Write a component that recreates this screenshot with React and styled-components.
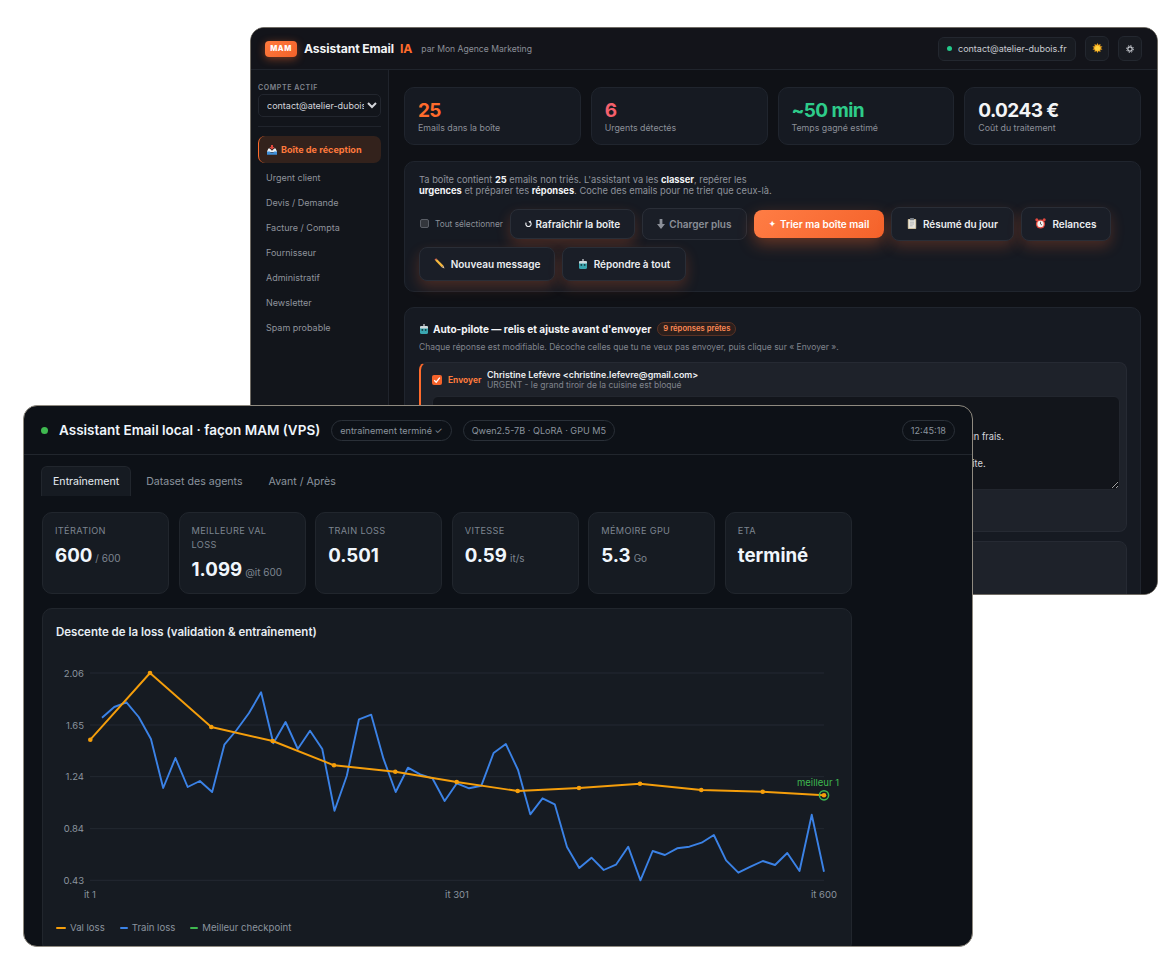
import React from "react";
import styled, { createGlobalStyle } from "styled-components";

const GlobalStyle = createGlobalStyle`
  html, body {
    margin: 0;
    padding: 0;
    background: #fff;
  }
  * {
    box-sizing: border-box;
  }
  body {
    font-family: Inter, "Liberation Sans", sans-serif;
  }
`;

const Desk = styled.div`
  position: relative;
  width: 1176px;
  height: 968px;
  overflow: hidden;
  background: #fff;
`;

const Window = styled.div`
  position: absolute;
  left: ${(p) => p.$left}px;
  top: ${(p) => p.$top}px;
  width: ${(p) => p.$width}px;
  height: ${(p) => p.$height}px;
  display: flex;
  flex-direction: column;
  overflow: hidden;
  border-radius: 14px;
  border: 1px solid ${(p) => p.$edge};
  background: ${(p) => p.$bg};
`;

/* Back window: mail assistant */

const MailHeader = styled.header`
  flex: none;
  height: 42px;
  display: flex;
  align-items: center;
  padding: 0 15px 0 14px;
  background: #13141a;
  border-bottom: 1px solid #20242c;
`;
const Logo = styled.div`
  width: 32px;
  height: 16px;
  margin-right: 7px;
  border-radius: 4px;
  background: linear-gradient(135deg, #ff7a3d, #f4622a);
  box-shadow: 0 2px 8px rgba(255, 107, 44, 0.45);
  color: #fff;
  font-size: 7.5px;
  font-weight: 800;
  letter-spacing: 0.5px;
  line-height: 16px;
  text-align: center;
`;
const MailTitle = styled.div`
  color: #f3f4f6;
  font-size: 12.2px;
  font-weight: 700;
  letter-spacing: -0.1px;
  span {
    margin-left: 6px;
    color: #ff6b2c;
  }
`;
const MailOwner = styled.div`
  margin-left: 9px;
  color: #8b8f98;
  font-size: 8.6px;
`;
const HeaderRight = styled.div`
  margin-left: auto;
  display: flex;
  align-items: center;
`;
const AccountChip = styled.div`
  height: 24px;
  width: 138px;
  display: flex;
  align-items: center;
  gap: 6px;
  padding: 0 8px 0 8px;
  border: 1px solid #23272f;
  border-radius: 6px;
  background: #181b21;
  color: #c9ccd2;
  font-size: 9px;
  white-space: nowrap;
`;
const GreenDot = styled.i`
  flex: none;
  width: 5px;
  height: 5px;
  border-radius: 50%;
  background: #22c98a;
`;
const IconButton = styled.div`
  width: 24px;
  height: 25px;
  margin-left: 9px;
  display: flex;
  align-items: center;
  justify-content: center;
  border: 1px solid #23272f;
  border-radius: 6px;
  background: #181b21;
`;

const MailBody = styled.div`
  flex: 1;
  min-height: 0;
  display: flex;
`;
const Sidebar = styled.aside`
  flex: none;
  width: 138px;
  padding: 13px 7px 0;
  background: #12151b;
  border-right: 1px solid #20242c;
`;
const SideLabel = styled.div`
  color: #80848d;
  font-size: 7px;
  font-weight: 600;
  letter-spacing: 0.6px;
  line-height: 9px;
  margin-bottom: 1px;
`;
const AccountSelect = styled.select`
  width: 123px;
  height: 23px;
  padding: 0 0 0 4px;
  border: 1px solid #22262e;
  border-radius: 5px;
  background: #12151b;
  color: #d4d6db;
  color-scheme: dark;
  font-family: Inter, sans-serif;
  font-size: 9px;
  outline: none;
`;
const SideRule = styled.div`
  height: 1px;
  margin: 9px 0;
  background: #20242c;
`;
const NavItem = styled.div`
  display: flex;
  align-items: center;
  gap: 4px;
  height: ${(p) => (p.$active ? 27 : 25)}px;
  padding-left: 8px;
  margin-bottom: ${(p) => (p.$active ? 2 : 0)}px;
  border-left: ${(p) => (p.$active ? "1.5px solid #ff6b2c" : "none")};
  border-radius: 7px;
  background: ${(p) => (p.$active ? "#33221c" : "transparent")};
  color: ${(p) => (p.$active ? "#ff7a3d" : "#8f939c")};
  font-size: ${(p) => (p.$active ? 9.1 : 9)}px;
  font-weight: ${(p) => (p.$active ? 700 : 400)};
`;

const MailMain = styled.main`
  flex: 1;
  min-width: 0;
  padding: 17px 16px 0 15px;
  background: #0f1116;
`;
const MailStats = styled.div`
  display: grid;
  grid-template-columns: repeat(4, 1fr);
  gap: 10px;
  margin-bottom: 16px;
`;
const MailStat = styled.div`
  height: 58px;
  padding: 13px 13px 0;
  border: 1px solid #20252e;
  border-radius: 10px;
  background: #161a22;
`;
const MailStatValue = styled.div`
  color: ${(p) => p.$color};
  font-size: 19px;
  font-weight: 700;
  letter-spacing: -0.6px;
  line-height: 20px;
`;
const MailStatLabel = styled.div`
  color: #8b8f98;
  font-size: 8.8px;
  line-height: 13px;
`;
const Panel = styled.section`
  padding: 13px 13px 0 14px;
  margin-bottom: 15px;
  min-height: ${(p) => p.$min || 0}px;
  border: 1px solid #20252e;
  border-radius: 10px;
  background: #161a22;
`;
const Intro = styled.p`
  margin: -1px 0 14px 0;
  color: #8f939c;
  font-size: 9.3px;
  line-height: 11.4px;
  width: 355px;
  b {
    color: #f3f4f6;
    font-weight: 700;
  }
`;
const Actions = styled.div`
  display: flex;
  flex-wrap: wrap;
  align-items: center;
  gap: 6px 7px;
  margin-top: -4px;
`;
const SelectAll = styled.label`
  display: flex;
  align-items: center;
  gap: 6px;
  margin-left: 1px;
  color: #8b8f98;
  font-size: 8.3px;
`;
const GreyCheck = styled.input`
  width: 9px;
  height: 9px;
  margin: 0;
  appearance: none;
  border: 1px solid #5a5e66;
  border-radius: 2px;
  background: #33363c;
`;
const ActionButton = styled.button`
  display: flex;
  align-items: center;
  justify-content: center;
  gap: ${(p) => p.$gap || 4}px;
  width: ${(p) => p.$width}px;
  height: ${(p) => p.$height || 34}px;
  padding: 0;
  border: 1px solid #2a2e37;
  border-radius: 8px;
  background: #1a1e27;
  box-shadow: 0 6px 14px rgba(255, 107, 44, ${(p) => (p.$muted ? 0 : 0.22)});
  color: ${(p) => (p.$muted ? "#8b8f98" : "#eceef1")};
  font-family: Inter, sans-serif;
  font-size: 10px;
  font-weight: 600;
  white-space: nowrap;
`;
const PrimaryButton = styled(ActionButton)`
  border: none;
  background: linear-gradient(135deg, #ff7d45, #f4622a);
  box-shadow: 0 6px 16px rgba(255, 107, 44, 0.35);
  color: #fff;
`;
const Sparkle = styled.span`
  font-family: "DejaVu Sans", sans-serif;
  font-size: 9px;
`;
const AutoHead = styled.div`
  display: flex;
  align-items: center;
  gap: 4px;
  height: 15px;
  color: #f3f4f6;
  font-size: 10.1px;
  font-weight: 700;
`;
const ReadyBadge = styled.span`
  margin-left: 2px;
  height: 14px;
  width: 79px;
  text-align: center;
  border: 1px solid #5a3224;
  border-radius: 7px;
  background: #2c1f1c;
  color: #ff8a55;
  font-size: 7.7px;
  font-weight: 600;
  line-height: 12px;
`;
const AutoNote = styled.p`
  margin: 6px 0 9px;
  color: #80848d;
  font-size: 8.5px;
  line-height: 11px;
`;
const ReplyCard = styled.article`
  height: ${(p) => p.$height}px;
  margin-bottom: 9px;
  padding: 6px 9px 0 11px;
  border: 1px solid #262a33;
  border-left: ${(p) => (p.$hot ? "2px solid #ff6b2c" : "1px solid #262a33")};
  border-radius: 8px;
  background: #1e222a;
`;
const ReplyTop = styled.div`
  display: flex;
  align-items: center;
  height: 21px;
  margin-bottom: 6px;
`;
const SendBox = styled.span`
  width: 10px;
  height: 10px;
  margin-right: 6px;
  display: flex;
  align-items: center;
  justify-content: center;
  border-radius: 2px;
  background: #f4622a;
`;
const SendLabel = styled.span`
  width: 39px;
  color: #ff7a3d;
  font-size: 8.4px;
  font-weight: 700;
`;
const ReplyFrom = styled.div`
  color: #eceef1;
  font-size: 8.9px;
  font-weight: 600;
  line-height: 10px;
`;
const ReplySubject = styled.div`
  color: #80848d;
  font-size: 8.5px;
  line-height: 10px;
`;
const ReplyText = styled.textarea`
  display: block;
  width: 688px;
  height: 94px;
  padding: 6px 10px;
  border: 1px solid #22262e;
  border-radius: 6px;
  background: #12151b;
  color: #d4d6db;
  color-scheme: dark;
  font-family: Inter, sans-serif;
  font-size: 9.3px;
  line-height: 13.5px;
  overflow: hidden;
  resize: vertical;
  outline: none;
`;

/* Front window: training dashboard */

const TrainHeader = styled.header`
  flex: none;
  height: 49px;
  display: flex;
  align-items: center;
  padding: 0 17px;
  border-bottom: 1px solid #21262d;
`;
const LiveDot = styled.i`
  flex: none;
  width: 7px;
  height: 7px;
  margin-right: 11px;
  border-radius: 50%;
  background: #3fb950;
`;
const TrainTitle = styled.h1`
  margin: 0 11px 0 0;
  color: #f0f6fc;
  font-size: 13.5px;
  font-weight: 600;
  white-space: nowrap;
`;
const Pill = styled.span`
  height: 21px;
  padding: 0 8px;
  margin-right: ${(p) => p.$after || 0}px;
  margin-left: ${(p) => (p.$push ? "auto" : 0)};
  display: flex;
  align-items: center;
  border: 1px solid #2a3038;
  border-radius: 11px;
  color: #8b949e;
  font-size: 9.1px;
  white-space: nowrap;
`;
const Tabs = styled.nav`
  flex: none;
  display: flex;
  gap: 2px;
  padding: 11px 17px 0;
  margin-bottom: 16px;
`;
const Tab = styled.div`
  height: 30px;
  padding: 0 ${(p) => p.$pad}px;
  display: flex;
  align-items: center;
  border: 1px solid ${(p) => (p.$active ? "#21262d" : "transparent")};
  border-bottom: none;
  border-radius: 6px 6px 0 0;
  background: ${(p) => (p.$active ? "#161b22" : "transparent")};
  color: ${(p) => (p.$active ? "#e6edf3" : "#8b949e")};
  font-size: 10.6px;
`;
const TrainContent = styled.div`
  width: 828px;
  padding: 0 0 0 18px;
`;
const TrainStats = styled.div`
  display: grid;
  grid-template-columns: repeat(6, 1fr);
  gap: 9.4px;
  margin-bottom: 14px;
`;
const TrainStat = styled.div`
  height: 82px;
  padding: 11px 12px 0;
  border: 1px solid #21262d;
  border-radius: 10px;
  background: #161b22;
`;
const TrainLabel = styled.div`
  color: #7d8590;
  font-size: 9.2px;
  letter-spacing: 0.35px;
  line-height: 14px;
  text-transform: uppercase;
`;
const TrainValue = styled.div`
  margin-top: 5px;
  color: #f0f6fc;
  font-size: 18.7px;
  font-weight: 700;
  line-height: 25px;
  small {
    margin-left: 3px;
    color: #7d8590;
    font-size: 10px;
    font-weight: 400;
  }
`;
const ChartPanel = styled.section`
  height: 345px;
  padding-top: 15px;
  border: 1px solid #21262d;
  border-radius: 10px;
  background: #161b22;
`;
const ChartTitle = styled.h2`
  margin: 0 0 9px 13px;
  color: #e6edf3;
  font-size: 11.5px;
  font-weight: 600;
  line-height: 16px;
`;
const ChartSvg = styled.svg`
  display: block;
  width: 808px;
  height: 255px;
  text {
    font-family: Inter, sans-serif;
    font-size: 9.5px;
    fill: #8b949e;
  }
  text.best {
    fill: #3fb950;
  }
`;
const Legend = styled.div`
  display: flex;
  gap: 15px;
  margin: 18px 0 0 13px;
`;
const LegendItem = styled.div`
  display: flex;
  align-items: center;
  gap: 4px;
  color: #8b949e;
  font-size: 9.6px;
  &::before {
    content: "";
    width: ${(p) => p.$dash}px;
    height: 2px;
    border-radius: 1px;
    background: ${(p) => p.$color};
  }
`;

const VAL_POINTS = [
  [90.3, 739.7], [150, 673], [211.3, 727], [272.7, 741], [334, 765.3], [395.3, 771.7],
  [456.7, 782], [517.7, 791], [579, 788], [640, 783.7], [701.3, 790], [762.7, 791.7], [824, 795.3],
];
const TRAIN_Y = [
  717.7, 707, 702.3, 717, 739, 788, 758, 787, 781, 792,
  744.7, 730, 713.3, 692.3, 743.3, 722, 749, 730.7, 749, 810.7,
  776, 719.3, 714.7, 758.7, 792, 767.7, 774.3, 778.3, 801, 783.3,
  788.3, 785.7, 753, 744, 770, 814.3, 798.3, 804.3, 847, 868,
  857.7, 870, 864.7, 846.7, 880.3, 851, 855, 848.3, 846.7, 842.7,
  835, 860.3, 872.7, 866.7, 861, 865, 853, 871, 814.7, 871.7,
];
const GRID = [
  ["2.06", 673], ["1.65", 725], ["1.24", 776.7], ["0.84", 828.7], ["0.43", 880.3],
];

const toLine = (pts) => pts.map((p) => p.join(",")).join(" ");

function LossChart() {
  const train = TRAIN_Y.map((y, i) => [102 + i * 12.237, y]);
  return (
    <ChartSvg viewBox="43 649 808 255">
      {GRID.map(([label, y]) => (
        <g key={label}>
          <line x1="90" x2="824" y1={y} y2={y} stroke="#232932" strokeWidth="1" />
          <text x="84" y={y + 3.5} textAnchor="end">{label}</text>
        </g>
      ))}
      <text x="90" y="898" textAnchor="middle">it 1</text>
      <text x="457" y="898" textAnchor="middle">it 301</text>
      <text x="824" y="898" textAnchor="middle">it 600</text>
      <polyline points={toLine(train)} fill="none" stroke="#3b82e6" strokeWidth="1.9" strokeLinejoin="round" />
      <polyline points={toLine(VAL_POINTS)} fill="none" stroke="#f59e0b" strokeWidth="1.9" strokeLinejoin="round" />
      {VAL_POINTS.map(([x, y]) => (
        <circle key={x} cx={x} cy={y} r="2.3" fill="#f59e0b" />
      ))}
      <circle cx="824" cy="795.3" r="4.6" fill="none" stroke="#3fb950" strokeWidth="1.5" />
      <text className="best" x="839" y="786" textAnchor="end">meilleur 1</text>
    </ChartSvg>
  );
}

const InboxIcon = () => (
  <svg width="10" height="10" viewBox="0 0 10 10">
    <path d="M4 0h2v2h1.6L5 4.6 2.4 2H4z" fill="#e0483e" />
    <path d="M1.4 3.6h1.4L5 5.8l2.2-2.2h1.4L10 6.6V7H0v-.4z" fill="#eef1f4" />
    <path d="M0 6.6h3l.6 1h2.8l.6-1h3v3.2H0z" fill="#3f8fd8" />
  </svg>
);
const PencilIcon = () => (
  <svg width="11" height="11" viewBox="0 0 11 11">
    <path d="M1.2 2.4l1.6-1.4 6.6 6.6-1.7 1.6z" fill="#f5b83d" />
    <path d="M7.7 9.2l1.7-1.6 1.1 2.9z" fill="#e9c7a0" />
    <path d="M.5 1.7L2.1.3l.7.7-1.6 1.4z" fill="#e86a5c" />
  </svg>
);
const RobotIcon = ({ size = 10 }) => (
  <svg width={size} height={size} viewBox="0 0 10 10">
    <rect x="4.4" y="0" width="1.2" height="2" fill="#d4d8dc" />
    <rect x="1" y="2" width="8" height="8" rx="1.6" fill="#3aa6b0" />
    <rect x="1" y="2" width="8" height="2.6" rx="1.2" fill="#cfd8dc" />
    <rect x="2.6" y="5.2" width="1.5" height="1.5" fill="#0f2a30" />
    <rect x="5.9" y="5.2" width="1.5" height="1.5" fill="#0f2a30" />
  </svg>
);
const ClipboardIcon = () => (
  <svg width="10" height="11" viewBox="0 0 10 11">
    <rect x="0.8" y="1" width="8.4" height="10" rx="0.8" fill="#cdbf9f" />
    <rect x="1.8" y="2" width="6.4" height="8" fill="#e6e4dd" />
    <rect x="3" y="0" width="4" height="2.2" rx="0.5" fill="#7a8088" />
    <path d="M3 4.2h4M3 6h4M3 7.8h2.6" stroke="#a3a7ab" strokeWidth="0.7" />
  </svg>
);
const AlarmIcon = () => (
  <svg width="11" height="11" viewBox="0 0 11 11">
    <circle cx="5.5" cy="6" r="4.6" fill="#e2493f" />
    <circle cx="5.5" cy="6" r="3.2" fill="#f3f1ee" />
    <path d="M5.5 3.8V6l1.5 1" stroke="#2b2b2b" strokeWidth="0.7" fill="none" />
    <circle cx="1.8" cy="1.8" r="1.5" fill="#e2493f" />
    <circle cx="9.2" cy="1.8" r="1.5" fill="#e2493f" />
  </svg>
);
const SunIcon = () => (
  <svg width="11" height="11" viewBox="0 0 11 11">
    <path
      d="M5.5 0l1 2 2-1-.3 2.2 2.3.2-1.6 1.6 1.6 1.6-2.3.2.3 2.2-2-1-1 2-1-2-2 1 .3-2.2L.5 6.6l1.6-1.6L.5 3.4l2.3-.2L2.5 1l2 1z"
      fill="#f2a91f"
    />
    <circle cx="5.5" cy="5.2" r="2.5" fill="#ffd23f" />
  </svg>
);
const GearIcon = () => (
  <svg width="8" height="8" viewBox="0 0 8 8">
    <circle cx="4" cy="4" r="3.4" fill="none" stroke="#c9ccd2" strokeWidth="1" strokeDasharray="1.3 1.37" />
    <circle cx="4" cy="4" r="2.2" fill="none" stroke="#c9ccd2" strokeWidth="1.2" />
  </svg>
);
const RefreshIcon = () => (
  <svg width="7" height="7" viewBox="0 0 8 8">
    <path d="M1.4 3a3 3 0 1 0 5.6 1.4A3 3 0 0 0 5.4 1.6" fill="none" stroke="#eceef1" strokeWidth="1.3" />
    <path d="M7 0.6L3.8 1.8 6 3.6z" fill="#eceef1" />
  </svg>
);
const DownIcon = () => (
  <svg width="8" height="10" viewBox="0 0 8 10">
    <path d="M2.6 0h2.8v5H8L4 10 0 5h2.6z" fill="#8b8f98" />
  </svg>
);
const CheckMark = () => (
  <svg width="8" height="8" viewBox="0 0 8 8">
    <path d="M1.2 4.2l2 2L6.8 1.6" fill="none" stroke="#fff" strokeWidth="1.3" />
  </svg>
);

const STATS = [
  { value: "25", label: "Emails dans la boîte", color: "#ff6b2c" },
  { value: "6", label: "Urgents détectés", color: "#f4606c" },
  { value: "~50 min", label: "Temps gagné estimé", color: "#2ecc8a" },
  { value: "0.0243 €", label: "Coût du traitement", color: "#f3f4f6" },
];
const FOLDERS = ["Urgent client", "Devis / Demande", "Facture / Compta", "Fournisseur", "Administratif", "Newsletter", "Spam probable"];
const TRAIN_STATS = [
  { label: "Itération", value: "600", unit: "/ 600" },
  { label: "Meilleure val loss", value: "1.099", unit: "@it 600" },
  { label: "Train loss", value: "0.501" },
  { label: "Vitesse", value: "0.59", unit: "it/s" },
  { label: "Mémoire GPU", value: "5.3", unit: "Go" },
  { label: "ETA", value: "terminé" },
];

const DRAFT = `Bonjour Christine,

Merci pour votre message. Je comprends, un tiroir bloqué au quotidien c'est vraiment pénible : je passe le vérifier sans un frais.

Je peux passer chez vous jeudi matin pour regarder le rail, dites-moi si ce créneau vous convient, je vous réponds très vite.`;

function MailWindow() {
  return (
    <Window $left={250} $top={27} $width={908} $height={568} $bg="#0f1116" $edge="#6f6b64">
      <MailHeader>
        <Logo>MAM</Logo>
        <MailTitle>
          Assistant Email<span>IA</span>
        </MailTitle>
        <MailOwner>par Mon Agence Marketing</MailOwner>
        <HeaderRight>
          <AccountChip>
            <GreenDot />
            contact@atelier-dubois.fr
          </AccountChip>
          <IconButton>
            <SunIcon />
          </IconButton>
          <IconButton>
            <GearIcon />
          </IconButton>
        </HeaderRight>
      </MailHeader>
      <MailBody>
        <Sidebar>
          <SideLabel>COMPTE ACTIF</SideLabel>
          <AccountSelect defaultValue="contact">
            <option value="contact">contact@atelier-dubois.fr</option>
          </AccountSelect>
          <SideRule />
          <NavItem $active>
            <InboxIcon />
            Boîte de réception
          </NavItem>
          {FOLDERS.map((name) => (
            <NavItem key={name}>{name}</NavItem>
          ))}
        </Sidebar>
        <MailMain>
          <MailStats>
            {STATS.map((s) => (
              <MailStat key={s.label}>
                <MailStatValue $color={s.color}>{s.value}</MailStatValue>
                <MailStatLabel>{s.label}</MailStatLabel>
              </MailStat>
            ))}
          </MailStats>
          <Panel $min={131}>
            <Intro>
              Ta boîte contient <b>25</b> emails non triés. L'assistant va les <b>classer</b>, repérer les{" "}
              <b>urgences</b> et préparer tes <b>réponses</b>. Coche des emails pour ne trier que ceux-là.
            </Intro>
            <Actions>
              <SelectAll>
                <GreyCheck type="checkbox" />
                Tout sélectionner
              </SelectAll>
              <ActionButton $width={125} $height={30}>
                <RefreshIcon />
                Rafraîchir la boîte
              </ActionButton>
              <ActionButton $width={105} $height={32} $muted>
                <DownIcon />
                Charger plus
              </ActionButton>
              <PrimaryButton $width={130} $height={28}>
                <Sparkle>✦</Sparkle>
                Trier ma boîte mail
              </PrimaryButton>
              <ActionButton $width={123} $gap={6}>
                <ClipboardIcon />
                Résumé du jour
              </ActionButton>
              <ActionButton $width={90} $gap={6}>
                <AlarmIcon />
                Relances
              </ActionButton>
              <ActionButton $width={136} $gap={6}>
                <PencilIcon />
                Nouveau message
              </ActionButton>
              <ActionButton $width={124} $gap={6}>
                <RobotIcon />
                Répondre à tout
              </ActionButton>
            </Actions>
          </Panel>
          <Panel>
            <AutoHead>
              <RobotIcon />
              Auto-pilote — relis et ajuste avant d'envoyer
              <ReadyBadge>9 réponses prêtes</ReadyBadge>
            </AutoHead>
            <AutoNote>Chaque réponse est modifiable. Décoche celles que tu ne veux pas envoyer, puis clique sur « Envoyer ».</AutoNote>
            <ReplyCard $hot $height={170}>
              <ReplyTop>
                <SendBox>
                  <CheckMark />
                </SendBox>
                <SendLabel>Envoyer</SendLabel>
                <div>
                  <ReplyFrom>Christine Lefèvre &lt;christine.lefevre@gmail.com&gt;</ReplyFrom>
                  <ReplySubject>URGENT - le grand tiroir de la cuisine est bloqué</ReplySubject>
                </div>
              </ReplyTop>
              <ReplyText readOnly value={DRAFT} />
            </ReplyCard>
            <ReplyCard $height={120} />
          </Panel>
        </MailMain>
      </MailBody>
    </Window>
  );
}

function TrainingWindow() {
  return (
    <Window $left={23} $top={405} $width={950} $height={542} $bg="#0d1117" $edge="#8f8a80">
      <TrainHeader>
        <LiveDot />
        <TrainTitle>Assistant Email local · façon MAM (VPS)</TrainTitle>
        <Pill $after={11}>entraînement terminé ✓</Pill>
        <Pill>Qwen2.5-7B · QLoRA · GPU M5</Pill>
        <Pill $push>12:45:18</Pill>
      </TrainHeader>
      <Tabs>
        <Tab $active $pad={11}>Entraînement</Tab>
        <Tab $pad={12}>Dataset des agents</Tab>
        <Tab $pad={10}>Avant / Après</Tab>
      </Tabs>
      <TrainContent>
        <TrainStats>
          {TRAIN_STATS.map((s) => (
            <TrainStat key={s.label}>
              <TrainLabel>{s.label}</TrainLabel>
              <TrainValue>
                {s.value}
                {s.unit && <small>{s.unit}</small>}
              </TrainValue>
            </TrainStat>
          ))}
        </TrainStats>
        <ChartPanel>
          <ChartTitle>Descente de la loss (validation &amp; entraînement)</ChartTitle>
          <LossChart />
          <Legend>
            <LegendItem $color="#f59e0b" $dash={10}>Val loss</LegendItem>
            <LegendItem $color="#3b82e6" $dash={8}>Train loss</LegendItem>
            <LegendItem $color="#3fb950" $dash={8}>Meilleur checkpoint</LegendItem>
          </Legend>
        </ChartPanel>
      </TrainContent>
    </Window>
  );
}

export default function App() {
  return (
    <Desk>
      <GlobalStyle />
      <MailWindow />
      <TrainingWindow />
    </Desk>
  );
}
